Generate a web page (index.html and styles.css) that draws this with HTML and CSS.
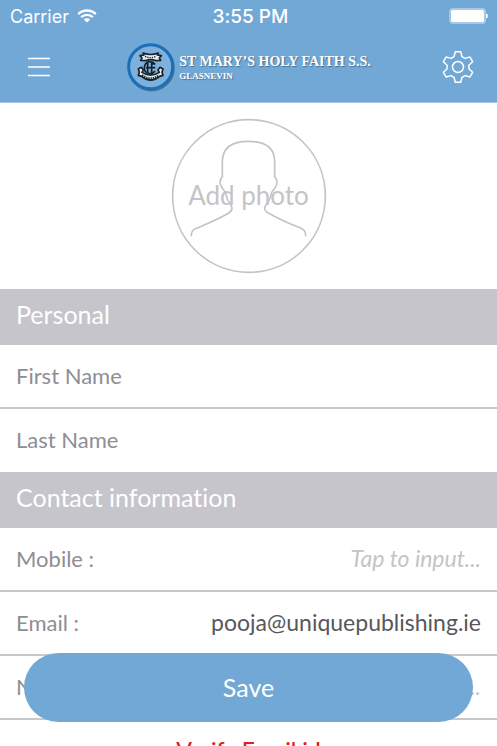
FILE: index.html
```html
<!DOCTYPE html>
<html lang="en">
<head>
<meta charset="utf-8">
<meta name="viewport" content="width=device-width, initial-scale=1">
<title>Profile</title>
<link rel="stylesheet" href="styles.css">
</head>
<body>
<div class="app">
  <header class="header">
    <div class="status">
      <div class="carrier">
        <span>Carrier</span>
        <svg class="wifi" viewBox="0 0 20 14" aria-hidden="true">
          <path d="M1.2 5.1a12.6 12.6 0 0 1 17.6 0" />
          <path d="M4.2 8.2a8.3 8.3 0 0 1 11.6 0" />
          <path class="wifi-dot" d="M10 13.6L6.8 10.5a4.6 4.6 0 0 1 6.4 0z" />
        </svg>
      </div>
      <div class="time">3:55 PM</div>
      <div class="battery">
        <svg viewBox="0 0 40 16" aria-hidden="true">
          <rect class="battery-case" x="1" y="1" width="35" height="14" rx="2.5" />
          <rect class="battery-fill" x="2" y="2" width="33" height="12" rx="1.5" />
          <path class="battery-fill" d="M37 5.500c2.600 .6 2.600 4.400 0 5z" />
        </svg>
      </div>
    </div>
    <nav class="bar">
      <button class="icon-button" type="button" aria-label="Menu">
        <svg class="menu-icon" viewBox="0 0 22 20" aria-hidden="true">
          <path d="M0 1.500H22M0 10H22M0 18.500H22" />
        </svg>
      </button>
      <div class="brand">
        <svg class="crest" viewBox="15 18 150 150" aria-hidden="true">
          <circle class="crest-shadow" cx="91" cy="96" r="66" />
          <circle class="crest-ring" cx="89" cy="92" r="66" />
          <path class="crest-ribbon" d="M57 59l12-2-3-6q23 9 46 0l-3 6 12 2-6 7 4 7-14 1q-16-6-32 0l-14-1 4-7z" />
          <path class="crest-ink" d="M72 61q17 8 34 0" />
          <path class="crest-mono" d="M102 84q-7-8-17-7-14 3-15 18t15 18q11 1 17-8M80 79v33M92 79v33M75 95h28M92 84h11" />
          <path class="crest-ribbon" d="M52 99l9-5 6 8-4 7q26 17 52 0l-4-7 6-8 9 5-3 10 3 9-10 3q-27 23-54 0l-10-3 3-9z" />
          <path class="crest-letters" d="M63 118q26 20 52 0" />
        </svg>
        <div class="brand-text">
          <div class="brand-name">ST MARY’S HOLY FAITH S.S.</div>
          <div class="brand-place">GLASNEVIN</div>
        </div>
      </div>
      <button class="icon-button" type="button" aria-label="Settings">
        <svg class="gear-icon" viewBox="-16 -17 32 34" aria-hidden="true">
          <path d="M-2.700-15.300H2.700L4-10.300L6.900-8.600L11.900-10L14.600-5.300L10.900-1.700V1.700L14.600 5.300L11.900 10L6.900 8.600L4 10.300L2.700 15.300H-2.700L-4 10.300L-6.900 8.600L-11.900 10L-14.600 5.300L-10.900 1.700V-1.700L-14.600-5.300L-11.900-10L-6.900-8.600L-4-10.300Z" />
          <circle r="5.500" />
        </svg>
      </button>
    </nav>
  </header>

  <form class="form" id="profile">
    <div class="photo">
      <button class="photo-button" type="button">
        <svg viewBox="32 24 468 468" aria-hidden="true">
          <circle cx="266" cy="258" r="229" />
          <path d="M93 377C92 365 98 359 108 355C145 339 180 325 205 309C216 302 217 296 213 288C205 277 199 266 196 250C194 240 183 236 180 222C178 211 181 205 186 200V155C186 112 214 94 265 94C316 94 343 114 343 155V200C349 206 351 214 349 224C346 237 335 241 333 250C330 266 324 277 316 286C311 295 312 302 323 308C350 324 385 340 421 354C432 359 437 366 436 377" />
        </svg>
        <span class="photo-text">Add photo</span>
      </button>
    </div>

    <h2 class="section-title">Personal</h2>
    <div class="row">
      <label for="first">First Name</label>
      <input id="first" type="text">
    </div>
    <div class="row row-last">
      <label for="last">Last Name</label>
      <input id="last" type="text">
    </div>

    <h2 class="section-title">Contact information</h2>
    <div class="row">
      <label for="mobile">Mobile :</label>
      <input id="mobile" type="tel" placeholder="Tap to input...">
    </div>
    <div class="row">
      <label for="email">Email :</label>
      <input id="email" type="email" value="pooja@uniquepublishing.ie">
    </div>
    <div class="row">
      <label for="number">N</label>
      <input id="number" type="text" placeholder="Tap to input...">
    </div>
    <p class="verify">Verify Email id</p>
  </form>

  <button class="save" type="submit" form="profile">Save</button>
</div>
</body>
</html>
```

FILE: styles.css
```css
* {
  box-sizing: border-box;
}

body {
  margin: 0;
  background: #fff;
  color: #8e8e93;
  font-family: Lato, "Liberation Sans", sans-serif;
  font-size: 23px;
  font-variant-ligatures: none;
}

button,
input {
  font: inherit;
}

button {
  padding: 0;
  border: 0;
  background: none;
  cursor: pointer;
}

svg {
  display: block;
  fill: none;
}

.app {
  position: relative;
  display: flex;
  flex-direction: column;
  height: 100vh;
  overflow: hidden;
}

.header {
  flex: none;
  background: #72a8d6;
  border-bottom: 1px solid #a9c8e3;
  color: #fff;
}

.status {
  display: grid;
  grid-template-columns: 1fr auto 1fr;
  align-items: center;
  height: 32px;
  padding: 0 8px 0 10px;
  font-family: Inter, Roboto, sans-serif;
  font-size: 18px;
}

.carrier {
  display: flex;
  align-items: center;
  gap: 8px;
}

.wifi {
  width: 20px;
  height: 14px;
  stroke: #fff;
  stroke-width: 2.4;
}

.wifi-dot {
  fill: #fff;
  stroke: none;
}

.time {
  padding-left: 2px;
  font-size: 19px;
  font-weight: 500;
}

.battery {
  justify-self: end;
  width: 40px;
}

.battery-case {
  stroke: #b9d4eb;
  stroke-width: 1.4;
}

.battery-fill {
  fill: #fff;
}

.bar {
  display: flex;
  align-items: center;
  justify-content: space-between;
  height: 70px;
  padding: 0 16px;
}

.icon-button {
  display: grid;
  place-items: center;
  width: 46px;
  height: 46px;
}

.menu-icon {
  width: 22px;
  height: 20px;
  stroke: #fff;
  stroke-width: 1.5;
}

.gear-icon {
  width: 32px;
  height: 34px;
  stroke: #fff;
  stroke-width: 1.5;
  stroke-linejoin: round;
}

.brand {
  display: flex;
  align-items: center;
  gap: 3px;
}

.crest {
  width: 50px;
  height: 50px;
}

.crest-shadow {
  stroke: #4b7396;
  stroke-width: 9;
}

.crest-ring {
  fill: #7db0dc;
  stroke: #1970b8;
  stroke-width: 9;
}

.crest-ribbon {
  fill: #e9edf0;
  stroke: #15202b;
  stroke-width: 5;
  stroke-linejoin: round;
}

.crest-ink {
  stroke: #15202b;
  stroke-width: 4;
  stroke-dasharray: 4 3;
}

.crest-mono {
  stroke: #15202b;
  stroke-width: 5;
}

.crest-letters {
  stroke: #15202b;
  stroke-width: 8;
  stroke-dasharray: 4 3;
}

.brand-text {
  font-family: "Liberation Serif", serif;
  font-weight: 700;
  text-shadow: 1px 1px 1px #4a6f91;
  white-space: nowrap;
}

.brand-name {
  font-size: 14px;
  line-height: 17px;
}

.brand-place {
  font-size: 9px;
  line-height: 12px;
}

.form {
  flex: 1;
  min-height: 0;
  overflow-y: auto;
  scrollbar-width: none;
}

.photo {
  display: flex;
  justify-content: center;
  padding: 15px 0;
}

.photo-button {
  display: grid;
  place-items: center;
  color: #c4c4c6;
}

.photo-button > * {
  grid-area: 1 / 1;
}

.photo-button svg {
  width: 156px;
  height: 156px;
  stroke: #c4c4c6;
  stroke-width: 5;
  stroke-linecap: round;
}

.photo-text {
  padding-bottom: 2px;
  font-size: 26px;
}

.section-title {
  height: 56px;
  margin: 0;
  padding: 0 16px;
  background: #c6c5cb;
  color: #fff;
  font-size: 25px;
  font-weight: 400;
  line-height: 51px;
}

.row {
  display: flex;
  align-items: center;
  gap: 16px;
  height: 64px;
  padding: 0 16px 2px;
  border-bottom: 2px solid #c8c8ca;
}

.row-last {
  height: 63px;
  border-bottom: 0;
}

.row label {
  flex: none;
  font-size: 22px;
}

.row input {
  flex: 1;
  min-width: 0;
  padding: 0;
  border: 0;
  outline: 0;
  background: none;
  color: #58585b;
  text-align: right;
}

.row input::placeholder {
  color: #c4c4c8;
  font-style: italic;
  opacity: 1;
}

.verify {
  margin: 0;
  padding: 14px 16px;
  color: #e02020;
  font-weight: 500;
  line-height: 32px;
  text-align: center;
}

.save {
  position: absolute;
  right: 24px;
  bottom: 24px;
  left: 24px;
  height: 69px;
  padding-bottom: 2px;
  border-radius: 35px;
  background: #72a8d6;
  color: #fff;
  font-size: 25px;
}
```
